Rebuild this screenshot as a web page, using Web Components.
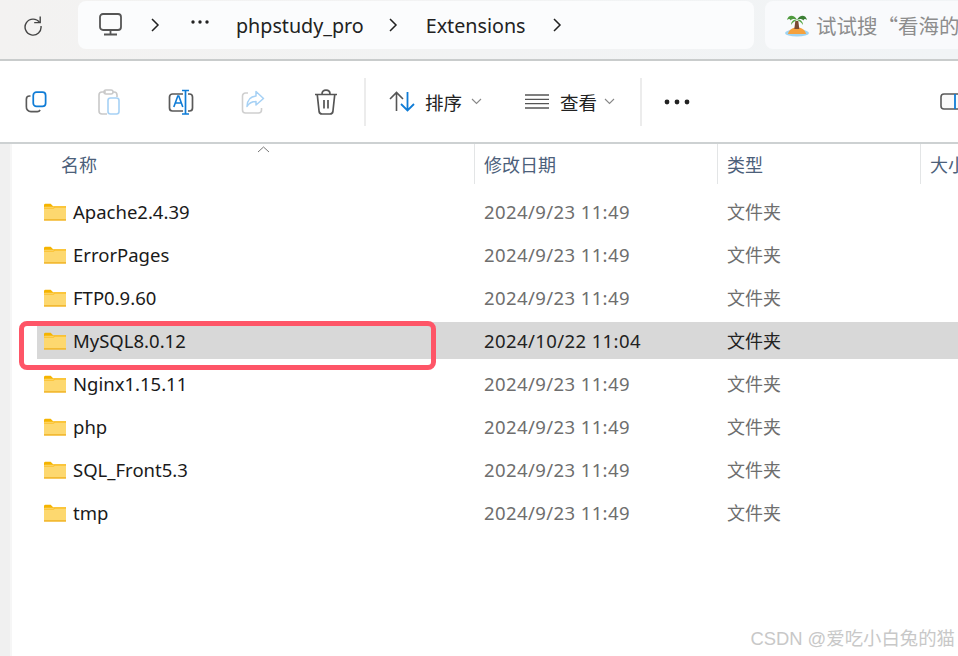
<!DOCTYPE html>
<html>
<head>
<meta charset="utf-8">
<style>
  html, body { margin: 0; height: 100%; background: #fff; overflow: hidden; }
  body { font-family: "Noto Sans", "Noto Sans CJK SC", sans-serif; }
  #app { position: relative; width: 958px; height: 656px; overflow: hidden; display: flex; flex-direction: column; }
</style>
</head>
<body>
<div id="app">
  <x-topbar></x-topbar>
  <x-toolbar></x-toolbar>
  <x-file-list>
    <x-file-row name="Apache2.4.39" date="2024/9/23 11:49"></x-file-row>
    <x-file-row name="ErrorPages" date="2024/9/23 11:49"></x-file-row>
    <x-file-row name="FTP0.9.60" date="2024/9/23 11:49"></x-file-row>
    <x-file-row name="MySQL8.0.12" date="2024/10/22 11:04" selected></x-file-row>
    <x-file-row name="Nginx1.15.11" date="2024/9/23 11:49"></x-file-row>
    <x-file-row name="php" date="2024/9/23 11:49"></x-file-row>
    <x-file-row name="SQL_Front5.3" date="2024/9/23 11:49"></x-file-row>
    <x-file-row name="tmp" date="2024/9/23 11:49"></x-file-row>
  </x-file-list>
  <x-callout></x-callout>
  <x-watermark>CSDN @爱吃小白兔的猫</x-watermark>
</div>

<script>
const chevron = /*html*/ `<svg width="12" height="16" viewBox="0 0 12 16"><path d="M3 2l6 6-6 6" fill="none" stroke="#222" stroke-width="1.5"/></svg>`;

class XTopbar extends HTMLElement {
  constructor() {
    super();
    this.attachShadow({ mode: "open" });
    this.shadowRoot.innerHTML = /*html*/ `
      <style>
        :host {
          display: flex;
          height: 61px;
          box-sizing: border-box;
          padding-top: 1px;
          background: linear-gradient(90deg, #f3f2f1, #f1f4f6);
          border-bottom: 2px solid #c9cccc;
          flex: none;
          color: #222;
          font-size: 19.700px;
        }
        .refresh { width: 78px; display: flex; justify-content: center; padding-top: 13px; box-sizing: border-box; margin-left: -6px; margin-right: 6px; flex: none; }
        .refresh svg { display: block; }
        .crumbs {
          width: 676px;
          height: 48px;
          background: #fbfcfd;
          border-radius: 8px;
          display: flex;
          align-items: center;
          flex: none;
          box-sizing: border-box;
          padding-left: 21px;
        }
        .crumbs > * { flex: none; }
        .search {
          margin-left: 11px;
          flex: 1;
          height: 48px;
          background: #f9fafc;
          border-radius: 8px 0 0 8px;
          display: flex;
          align-items: center;
          padding-left: 20px;
          gap: 7px;
          color: #8d8d8d;
          font: 20.500px "Noto Sans CJK SC", sans-serif;
          overflow: hidden;
          white-space: nowrap;
        }
      </style>
      <div class="refresh">
        <svg width="22" height="22" viewBox="0 0 22 22"><path d="M17.600 8.500A8 8 0 1 0 19 12" fill="none" stroke="#444" stroke-width="1.400"/><path d="M18.200 2.600v6h-6" fill="none" stroke="#444" stroke-width="1.400"/></svg>
      </div>
      <div class="crumbs">
        <svg width="23" height="23" viewBox="0 0 23 23" style="margin-top:-1px"><rect x="1" y="1" width="21" height="16" rx="3" fill="none" stroke="#555" stroke-width="1.800"/><path d="M11.500 17v4M5 21.500h13" stroke="#555" stroke-width="1.800" fill="none"/></svg>
        <span style="margin-left:27px;display:flex">${chevron}</span>
        <svg width="20" height="6" viewBox="0 0 20 6" style="margin-left:29px;margin-top:-6px"><circle cx="3" cy="3" r="1.700" fill="#222"/><circle cx="10" cy="3" r="1.700" fill="#222"/><circle cx="17" cy="3" r="1.700" fill="#222"/></svg>
        <span style="margin-left:26px">phpstudy_pro</span>
        <span style="margin-left:23px;display:flex">${chevron}</span>
        <span style="margin-left:27px">Extensions</span>
        <span style="margin-left:25px;display:flex">${chevron}</span>
      </div>
      <div class="search" lang="zh-CN">
        <svg width="24" height="24" viewBox="0 0 24 24" style="flex:none">
          <ellipse cx="12" cy="20" rx="12" ry="3.600" fill="#9fd3f2"/>
          <path d="M3 21c1-5 5-6.500 9-6.500s8 1.500 9 6.500z" fill="#f5a13e"/>
          <path d="M10.300 8h3l1 8h-5z" fill="#7a4a32"/>
          <path d="M12 7C9 1 3 2 2 7c2-1.500 3-1 3.500.500C7 5.500 10 5.500 12 7z" fill="#4f9a3e"/>
          <path d="M12 7c3-6 9-5 10 0-2-1.500-3-1-3.500.500C17 5.500 14 5.500 12 7z" fill="#3c7f35"/>
          <path d="M12 7c-3-1-6 1-6 5 2-3 4-4 6-5zM12 7c3-1 6 1 6 5-2-3-4-4-6-5z" fill="#5aa848"/>
        </svg>
        <span>试试搜“看海的</span>
      </div>
    `;
  }
}

class XToolButton extends HTMLElement {
  constructor() {
    super();
    this.attachShadow({ mode: "open" });
    this.shadowRoot.innerHTML = /*html*/ `
      <style>
        :host { display: flex; align-items: center; justify-content: center; width: 72.400px; height: 100%; flex: none; }
      </style>
      <slot></slot>
    `;
  }
}

class XToolbar extends HTMLElement {
  constructor() {
    super();
    this.attachShadow({ mode: "open" });
    this.shadowRoot.innerHTML = /*html*/ `
      <style>
        :host {
          display: flex;
          align-items: center;
          height: 83px;
          box-sizing: border-box;
          flex: none;
          background: #fff;
          border-bottom: 2px solid #cdd1d2;
          color: #222;
          font-size: 18.500px;
          overflow: hidden;
        }
        .sep { width: 2px; height: 48px; background: #ececec; flex: none; }
        .menu { display: flex; align-items: center; flex: none; }
        .label { white-space: nowrap; }
        svg { display: block; flex: none; }
      </style>
      <x-tool-button>
        <svg width="22" height="22" viewBox="0 0 24 24"><path d="M6 5.500H5a3.500 3.500 0 0 0-3.500 3.500v8A5 5 0 0 0 6.500 22.500h7a3.500 3.500 0 0 0 3-1.800" fill="none" stroke="#5a5a5a" stroke-width="1.800"/><rect x="9" y="1.300" width="13.500" height="15.500" rx="3.500" fill="#fff" stroke="#0f7cd6" stroke-width="1.900"/></svg>
      </x-tool-button>
      <x-tool-button>
        <svg width="24" height="26" viewBox="0 0 24 26"><path d="M9 3H5a3 3 0 0 0-3 3v16a3 3 0 0 0 3 3h5M16 3h1a3 3 0 0 1 3 3v2" fill="none" stroke="#c9c9c9" stroke-width="1.600"/><rect x="7" y="1" width="9" height="4" rx="2" fill="none" stroke="#c9c9c9" stroke-width="1.500"/><rect x="11" y="9" width="11" height="16" rx="2.500" fill="#fff" stroke="#a6d1f5" stroke-width="1.600"/></svg>
      </x-tool-button>
      <x-tool-button>
        <svg width="26" height="26" viewBox="0 0 26 26"><path d="M15 5H4.500A3 3 0 0 0 1.500 8v11a3 3 0 0 0 3 3H15M20 5h1.500a3 3 0 0 1 3 3v11a3 3 0 0 1-3 3H20" fill="none" stroke="#5a5a5a" stroke-width="1.700"/><path d="M5.800 18l4-11h1l4 11M7.300 14h6" fill="none" stroke="#0f7cd6" stroke-width="1.600"/><path d="M17.500 1.500v24M14 1.500h7M14 25h7" fill="none" stroke="#0f7cd6" stroke-width="1.700"/></svg>
      </x-tool-button>
      <x-tool-button>
        <svg width="24" height="24" viewBox="0 0 24 24"><path d="M7 3H4.500A3 3 0 0 0 1.500 6v14a3 3 0 0 0 3 3h13a3 3 0 0 0 3-3v-2" fill="none" stroke="#cfcfcf" stroke-width="1.600"/><path d="M15 1.500l7.500 7L15 15v-3.500c-4 0-7 1.500-9 5 .2-6 3.500-10 9-10.500z" fill="#fff" stroke="#a6d1f5" stroke-width="1.500" stroke-linejoin="round"/></svg>
      </x-tool-button>
      <x-tool-button>
        <svg width="24" height="26" viewBox="0 0 24 26"><path d="M1 5.500h22M8 5c0-2.500 1.500-3.800 4-3.800S16 2.500 16 5" fill="none" stroke="#555" stroke-width="1.700"/><path d="M3.300 6l1.800 16.500A3 3 0 0 0 8 25h8a3 3 0 0 0 2.900-2.500L20.700 6M10 11v8.500M14 11v8.500" fill="none" stroke="#555" stroke-width="1.700"/></svg>
      </x-tool-button>
      <div class="sep" style="margin-left:2px"></div>
      <div class="menu" style="margin-left:23px">
        <svg width="26" height="21" viewBox="0 0 26 21"><path d="M7.500 20V1.500M1 8l6.500-6.500L14 8" fill="none" stroke="#555" stroke-width="1.600"/><path d="M18.500 1v18.500M12 13l6.500 6.500L25 13" fill="none" stroke="#0f7cd6" stroke-width="1.800"/></svg>
        <span class="label" style="margin-left:10px">排序</span>
        <svg style="margin-left:9px" width="11" height="7" viewBox="0 0 11 7"><path d="M1 1l4.500 4.500L10 1" fill="none" stroke="#888" stroke-width="1.100"/></svg>
      </div>
      <div class="menu" style="margin-left:43px">
        <svg width="24" height="15" viewBox="0 0 24 15"><path d="M0 1h24M0 5.300h24M0 9.700h24M0 14h24" stroke="#555" stroke-width="1.300"/></svg>
        <span class="label" style="margin-left:11px">查看</span>
        <svg style="margin-left:7px" width="11" height="7" viewBox="0 0 11 7"><path d="M1 1l4.500 4.500L10 1" fill="none" stroke="#888" stroke-width="1.100"/></svg>
      </div>
      <div class="sep" style="margin-left:25px"></div>
      <svg style="margin-left:22px" width="26" height="6" viewBox="0 0 26 6"><circle cx="3" cy="3" r="2.400" fill="#222"/><circle cx="13" cy="3" r="2.400" fill="#222"/><circle cx="23" cy="3" r="2.400" fill="#222"/></svg>
      <svg style="margin-left:auto;margin-right:-8px" width="26" height="17" viewBox="0 0 26 17"><rect x="1" y="1" width="24" height="15" rx="3" fill="#fafafa" stroke="#5a5a5a" stroke-width="1.600"/><path d="M15 1v15" stroke="#0f7cd6" stroke-width="1.800"/></svg>
    `;
  }
}

class XFileList extends HTMLElement {
  constructor() {
    super();
    this.attachShadow({ mode: "open" });
    this.shadowRoot.innerHTML = /*html*/ `
      <style>
        :host { display: flex; flex: 1; min-height: 0; background: #fff; }
        .rail { width: 10px; background: #f0f0f0; border-right: 2px solid #f6f6f6; flex: none; }
        .main { flex: 1; min-width: 0; }
        .head {
          display: grid;
          grid-template-columns: 463px 243px 203px 1fr;
          height: 40px;
          font: 18px "Noto Sans CJK SC", sans-serif;
          color: #4c607a;
        }
        .head div { position: relative; display: flex; align-items: center; box-sizing: border-box; padding: 0 0 0 9px; border-right: 1px solid #e3e5e6; white-space: nowrap; overflow: hidden; }
        .head div:first-child { padding-left: 49px; }
        .head div:last-child { border: 0; }
        .sort { position: absolute; left: 245px; top: 2px; }
        .rows { padding-top: 9px; display: flex; flex-direction: column; gap: 6px; }
      </style>
      <div class="rail"></div>
      <div class="main">
        <div class="head" lang="zh-CN">
          <div>名称<svg class="sort" width="13" height="7" viewBox="0 0 13 7"><path d="M1 6l5.500-5L12 6" fill="none" stroke="#777" stroke-width="1"/></svg></div>
          <div>修改日期</div>
          <div>类型</div>
          <div>大小</div>
        </div>
        <div class="rows"><slot></slot></div>
      </div>
    `;
  }
}

class XFileRow extends HTMLElement {
  constructor() {
    super();
    this.attachShadow({ mode: "open" });
    this.shadowRoot.innerHTML = /*html*/ `
      <style>
        :host {
          display: grid;
          grid-template-columns: 447px 243px 1fr;
          align-items: center;
          height: 37px;
          margin-left: 25px;
          font-size: 18.500px;
          color: #6e6e6e;
          white-space: nowrap;
        }
        :host([selected]) { background: #d8d8d8; color: #222; }
        .name { display: flex; align-items: center; gap: 7px; padding-left: 7px; color: #1a1a1a; }
        .d { letter-spacing: .4px; }
        .t { font-size: 18px; margin-top: -2px; }
        svg { flex: none; }
      </style>
      <div class="name">
        <svg width="22" height="18" viewBox="0 0 23 18">
          <path d="M0 2a1.500 1.500 0 0 1 1.500-1.500H7L9.500 3H23v3H0z" fill="#f5b400"/>
          <rect x="0" y="3.500" width="23" height="14.500" rx="1" fill="#fdd86f"/>
          <rect x="0" y="16.500" width="23" height="1.500" fill="#f0b429"/>
          <path d="M0 4.500h9.500L11 3.300H23v1.200H11.500L10 5.500H0z" fill="#fbc02d"/>
        </svg>
        <span class="n"></span>
      </div>
      <div class="d"></div>
      <div class="t">文件夹</div>
    `;
  }

  connectedCallback() {
    this.shadowRoot.querySelector(".n").textContent = this.getAttribute("name");
    this.shadowRoot.querySelector(".d").textContent = this.getAttribute("date");
  }
}

// red box drawn on top of the screenshot
class XCallout extends HTMLElement {
  constructor() {
    super();
    this.attachShadow({ mode: "open" });
    this.shadowRoot.innerHTML = /*html*/ `
      <style>
        :host {
          position: absolute;
          left: 19px;
          top: 321px;
          width: 417px;
          height: 49px;
          box-sizing: border-box;
          border: 5px solid #fe5567;
          border-radius: 8px;
        }
      </style>
    `;
  }
}

class XWatermark extends HTMLElement {
  constructor() {
    super();
    this.attachShadow({ mode: "open" });
    this.shadowRoot.innerHTML = /*html*/ `
      <style>
        :host {
          position: absolute;
          right: 3px;
          bottom: 6px;
          font: 18.400px "Liberation Sans", "Noto Sans CJK SC", sans-serif;
          color: #c8c8c8;
          white-space: nowrap;
        }
      </style>
      <slot></slot>
    `;
  }
}

customElements.define("x-topbar", XTopbar);
customElements.define("x-tool-button", XToolButton);
customElements.define("x-toolbar", XToolbar);
customElements.define("x-file-list", XFileList);
customElements.define("x-file-row", XFileRow);
customElements.define("x-callout", XCallout);
customElements.define("x-watermark", XWatermark);
</script>
</body>
</html>
